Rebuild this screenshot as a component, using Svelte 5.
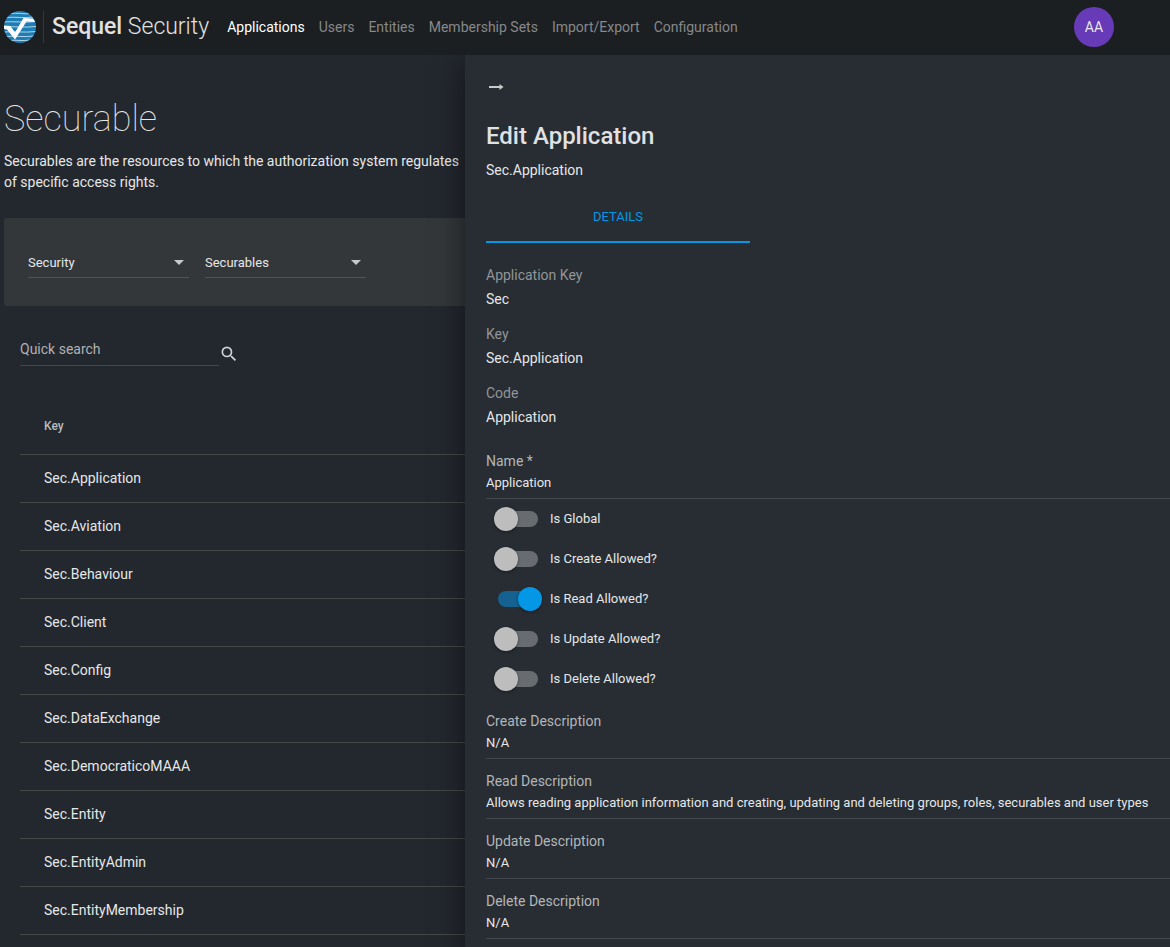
<script>
    const links = ["Applications", "Users", "Entities", "Membership Sets", "Import/Export", "Configuration"];

    const securables = [
        "Sec.Application",
        "Sec.Aviation",
        "Sec.Behaviour",
        "Sec.Client",
        "Sec.Config",
        "Sec.DataExchange",
        "Sec.DemocraticoMAAA",
        "Sec.Entity",
        "Sec.EntityAdmin",
        "Sec.EntityMembership"
    ];

    const info = [
        {label: "Application Key", value: "Sec"},
        {label: "Key", value: "Sec.Application"},
        {label: "Code", value: "Application"}
    ];

    let name = $state("Application");
    let search = $state("");
    let open = $state(true);

    let toggles = $state([
        {label: "Is Global", checked: false},
        {label: "Is Create Allowed?", checked: false},
        {label: "Is Read Allowed?", checked: true},
        {label: "Is Update Allowed?", checked: false},
        {label: "Is Delete Allowed?", checked: false}
    ]);

    let descriptions = $state([
        {id: "create", label: "Create Description", value: "N/A"},
        {id: "read", label: "Read Description", value: "Allows reading application information and creating, updating and deleting groups, roles, securables and user types"},
        {id: "update", label: "Update Description", value: "N/A"},
        {id: "delete", label: "Delete Description", value: "N/A"}
    ]);
</script>

<div class="app">
    <header class="topbar">
        <a class="brand" href="#home">
            <svg class="logo" width="32" height="32" viewBox="0 0 32 32">
                <defs>
                    <clipPath id="disc"><circle cx="16" cy="16" r="16"/></clipPath>
                </defs>
                <g clip-path="url(#disc)">
                    <rect width="32" height="32" fill="#1f7db5"/>
                    <g fill="none" stroke="#b5d5e8" stroke-width="1">
                        <path d="M7 2.500C13 1.500 20 3.500 26 2.500"/>
                        <path d="M2 6.500C10 5.500 20 7.500 30 6"/>
                        <path d="M0 11C10 10 20 12 32 10.500"/>
                        <path d="M0 16C10 15 20 17 32 15.500"/>
                        <path d="M0 21C10 20 20 22 32 20.500"/>
                        <path d="M2 25.500C10 24.500 20 26.500 30 25"/>
                        <path d="M6 29.500C12 28.500 20 30.500 26 29"/>
                    </g>
                    <path d="M0 14.500L6.500 15L11 21.500L19.500 7L29 7.500L31.500 11L22.500 10.500L11 28.500L3 18.500L0 18Z" fill="#fff"/>
                </g>
            </svg>
            <span class="product"><b>Sequel</b> Security</span>
        </a>
        <nav>
            {#each links as link, i}
                <a href="#{link}" class:active={i === 0}>{link}</a>
            {/each}
        </nav>
        <button class="avatar">AA</button>
    </header>

    <main>
        <h1>Securable</h1>
        <p class="intro">Securables are the resources to which the authorization system regulates<br>of specific access rights.</p>

        <div class="filters">
            <div class="select">
                <select aria-label="Application"><option>Security</option></select>
                <svg width="10" height="5" viewBox="0 0 10 5"><path d="M0 0h10l-5 5z" fill="#c8c9ca"/></svg>
            </div>
            <div class="select">
                <select aria-label="Section"><option>Securables</option></select>
                <svg width="10" height="5" viewBox="0 0 10 5"><path d="M0 0h10l-5 5z" fill="#c8c9ca"/></svg>
            </div>
        </div>

        <div class="search">
            <input type="text" placeholder="Quick search" aria-label="Quick search" bind:value={search}/>
            <button aria-label="Search">
                <svg width="20" height="20" viewBox="0 0 24 24"><path fill="#d0d1d2" d="M15.500 14h-.79l-.28-.27A6.470 6.470 0 0 0 16 9.500 6.500 6.500 0 1 0 9.500 16c1.610 0 3.090-.59 4.230-1.570l.27.28v.79l5 4.990L20.490 19l-4.990-5zm-6 0C7.010 14 5 11.990 5 9.500S7.010 5 9.500 5 14 7.010 14 9.500 11.990 14 9.500 14z"/></svg>
            </button>
        </div>

        <table>
            <thead>
                <tr><th>Key</th></tr>
            </thead>
            <tbody>
                {#each securables as key}
                    <tr><td>{key}</td></tr>
                {/each}
            </tbody>
        </table>
    </main>

    {#if open}
        <aside class="drawer">
            <button class="back" aria-label="Close" onclick={() => open = false}>
                <svg width="20" height="24" viewBox="0 0 20 24"><path d="M3 11h10.500V9l4 3-4 3v-2H3z" fill="#c8cacb"/></svg>
            </button>
            <h2>Edit Application</h2>
            <p class="subtitle">Sec.Application</p>
            <div class="tabs" role="tablist">
                <button role="tab" aria-selected="true">DETAILS</button>
            </div>

            <dl>
                {#each info as item}
                    <div>
                        <dt>{item.label}</dt>
                        <dd>{item.value}</dd>
                    </div>
                {/each}
            </dl>

            <form>
                <div class="field">
                    <label for="name">Name *</label>
                    <input id="name" type="text" bind:value={name}/>
                </div>
                {#each toggles as toggle}
                    <label class="toggle">
                        <input type="checkbox" bind:checked={toggle.checked}/>
                        {toggle.label}
                    </label>
                {/each}
                {#each descriptions as item}
                    <div class="field">
                        <label for={item.id}>{item.label}</label>
                        <input id={item.id} type="text" bind:value={item.value}/>
                    </div>
                {/each}
            </form>
        </aside>
    {/if}
</div>

<style>
    :global(body) {
        background: #23272e;
    }

    .app {
        position: relative;
        min-height: 100vh;
        overflow: hidden;
        background: #23272e;
        color: #e6e7e8;
        font: 14px/20px Roboto, sans-serif;
    }

    button, input, select {
        font: inherit;
        color: inherit;
        background: none;
        border: 0;
        border-radius: 0;
        padding: 0;
        margin: 0;
        outline: none;
    }

    button {
        cursor: pointer;
    }

    h1, h2, p, dl, dd {
        margin: 0;
    }

    .topbar {
        display: flex;
        align-items: center;
        height: 55px;
        padding: 0 56px 1px 4px;
        box-sizing: border-box;
        background: #1b1f22;
    }

    .brand {
        display: flex;
        align-items: center;
        color: #e0e1e1;
        text-decoration: none;
    }

    .product {
        margin-left: 7px;
        padding-left: 8px;
        border-left: 1px solid #34383b;
        font-size: 23px;
        line-height: 32px;
        font-weight: 300;
        white-space: nowrap;
    }

    .product b {
        font-weight: 500;
    }

    nav {
        display: flex;
        flex: 1;
        gap: 14px;
        margin-left: 18px;
    }

    nav a {
        color: #868889;
        text-decoration: none;
        white-space: nowrap;
    }

    nav a.active {
        color: #fff;
        font-weight: 450;
    }

    .avatar {
        width: 40px;
        height: 40px;
        border-radius: 50%;
        background: #673ab7;
    }

    main {
        padding-left: 4px;
    }

    h1 {
        padding-top: 40px;
        font-size: 36px;
        line-height: 48px;
        font-weight: 100;
    }

    .intro {
        margin-top: 8px;
        line-height: 21px;
        font-weight: 450;
        white-space: nowrap;
    }

    .filters {
        display: flex;
        gap: 16px;
        height: 88px;
        margin-top: 25px;
        padding: 29px 24px 0;
        box-sizing: border-box;
        border-radius: 2px;
        background: #33373a;
    }

    .select {
        position: relative;
        width: 161px;
    }

    .select select {
        width: 100%;
        height: 31px;
        padding-top: 1px;
        appearance: none;
        border-bottom: 1px solid #505457;
        font-size: 13px;
    }

    .select svg {
        position: absolute;
        top: 13px;
        right: 5px;
        pointer-events: none;
    }

    .search {
        display: flex;
        align-items: flex-end;
        margin: 26px 0 0 16px;
    }

    .search input {
        width: 199px;
        height: 33px;
        border-bottom: 1px solid #43484b;
    }

    .search input::placeholder {
        color: #b0b2b4;
        opacity: 1;
    }

    .search button {
        height: 24px;
    }

    .search svg {
        display: block;
    }

    table {
        width: calc(100% - 16px);
        margin: 31px 0 0 16px;
        border-collapse: separate;
        border-spacing: 0;
    }

    td {
        height: 45px;
        padding: 0 24px 2px;
        border-bottom: 1px solid #43484b;
    }

    th {
        height: 57px;
        padding: 0 24px;
        border-bottom: 1px solid #43484b;
        color: #b9bbbc;
        font-size: 12px;
        font-weight: 500;
        text-align: left;
    }

    .drawer {
        position: absolute;
        top: 55px;
        right: 0;
        bottom: 0;
        width: 60%;
        min-width: 705px;
        padding: 20px 0 0 21px;
        box-sizing: border-box;
        background: #272d33;
        box-shadow: 0 8px 28px rgba(0, 0, 0, 0.5);
        clip-path: inset(0 0 0 -40px);
    }

    .back {
        display: block;
        height: 24px;
    }

    .back svg {
        display: block;
    }

    h2 {
        margin-top: 21px;
        color: #e0e1e2;
        font-size: 24px;
        line-height: 32px;
        font-weight: 500;
    }

    .subtitle {
        margin-top: 8px;
        font-weight: 450;
    }

    .tabs {
        margin-top: 13px;
    }

    .tabs button {
        display: block;
        width: 264px;
        height: 50px;
        border-bottom: 2px solid #0397e5;
        color: #0397e5;
        font-size: 13px;
        font-weight: 450;
    }

    dl {
        display: flex;
        flex-direction: column;
        gap: 15px;
        margin-top: 22px;
        font-weight: 450;
    }

    dt {
        color: #929597;
    }

    dd {
        margin-top: 4px;
    }

    form {
        margin-top: 12px;
    }

    .field {
        padding-top: 12px;
    }

    .field label {
        display: block;
        color: #b3b6b8;
    }

    .field input {
        display: block;
        width: 100%;
        height: 28px;
        padding-bottom: 5px;
        box-sizing: border-box;
        border-bottom: 1px solid #42484d;
        font-size: 13px;
        font-weight: 450;
    }

    .toggle {
        display: flex;
        align-items: center;
        gap: 8px;
        height: 40px;
        margin-left: 8px;
        font-size: 13px;
        line-height: 22px;
        font-weight: 450;
    }

    .toggle input {
        position: relative;
        width: 48px;
        height: 24px;
        appearance: none;
    }

    .toggle input::before {
        content: "";
        position: absolute;
        top: 4px;
        left: 4px;
        width: 40px;
        height: 16px;
        border-radius: 8px;
        background: #686c70;
    }

    .toggle input::after {
        content: "";
        position: absolute;
        top: 0;
        left: 0;
        width: 24px;
        height: 24px;
        border-radius: 50%;
        background: #bdbdbd;
        box-shadow: 0 1px 3px rgba(0, 0, 0, 0.4);
    }

    .toggle input:checked::before {
        background: #15618f;
    }

    .toggle input:checked::after {
        left: 24px;
        background: #0397e5;
    }
</style>
